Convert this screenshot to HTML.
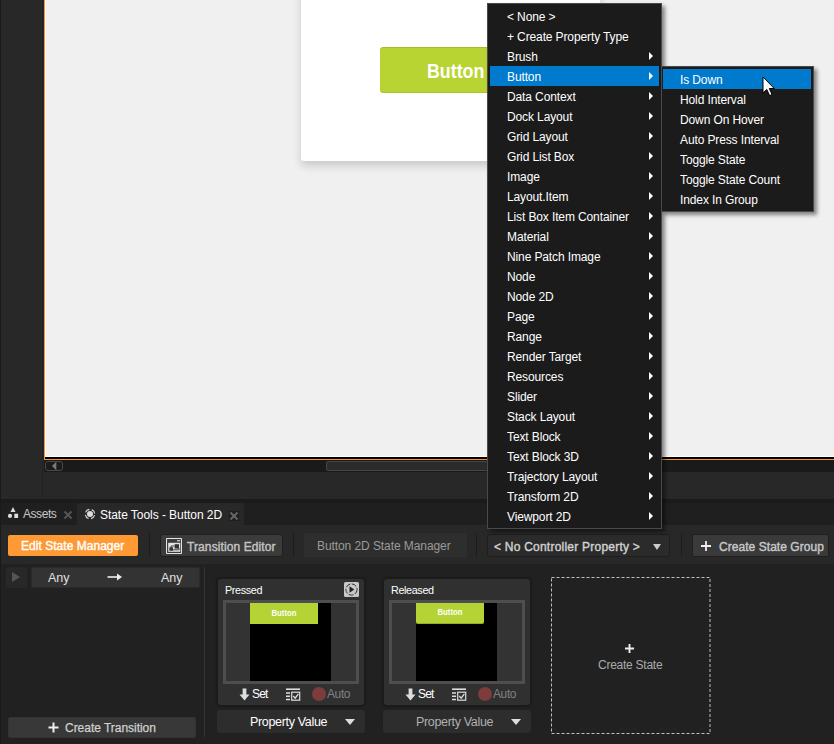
<!DOCTYPE html><html><head><meta charset="utf-8"><title>State Tools</title><style>
*{box-sizing:border-box;margin:0;padding:0}
html,body{width:834px;height:744px;overflow:hidden;background:#282828}
body{position:relative;font-family:"Liberation Sans",sans-serif;font-size:12px;color:#fff}
.a{position:absolute}
.t{position:absolute;white-space:nowrap;line-height:14px}
.menu{position:absolute;background:#1b1b1b;border:1px solid #4a4a4a;box-shadow:3px 3px 4px rgba(0,0,0,.45)}
.mi{position:absolute;left:2px;height:20px;line-height:20px;white-space:nowrap;letter-spacing:-0.12px}
.mi span{position:absolute;left:17px;top:1px}
.mi i{position:absolute;right:6px;top:6px;width:0;height:0;border-left:4.5px solid #fff;border-top:4px solid transparent;border-bottom:4px solid transparent}
.hl{background:#007acc}
.btn{position:absolute;background:#383838;border:1px solid #2b2b2b;border-radius:2px}
.sep{position:absolute;width:1px;background:#1c1c1c}
.card{position:absolute;width:146px;height:126px;background:#303030;border-radius:3px;box-shadow:0 0 0 1.5px #1b1b1b,0 0 2px 2px #1d1d1d}
.sb{-webkit-text-stroke:0.4px currentColor}
.pv{position:absolute;width:148px;height:23px;background:#2d2d2d;border-radius:3px}
</style></head><body>
<div class="a" style="left:0;top:0;width:1px;height:744px;background:#1a1a1a"></div>
<div class="a" style="left:42px;top:0;width:1px;height:499px;background:#222"></div>
<div class="a" style="left:44px;top:0;width:790px;height:460px;background:#f0f0f0;border-left:1px solid #f5922f;border-bottom:1px solid #f5922f"></div>
<div class="a" style="left:45px;top:0;width:1px;height:457px;background:#fff"></div>
<div class="a" style="left:45px;top:456px;width:789px;height:1px;background:#fff"></div>
<div class="a" style="left:45px;top:457px;width:789px;height:2px;background:#000"></div>
<div class="a" style="left:301px;top:-20px;width:299px;height:181px;background:#fff;border-radius:3px;box-shadow:0 5px 9px rgba(0,0,0,.16)"></div>
<div class="a" style="left:380px;top:47px;width:150px;height:46px;background:#b7d433;border-radius:4px;box-shadow:inset 0 1px 0 #a2bb30,inset 0 -1px 0 #a9c230"></div>
<div class="t" style="left:427px;top:59px;font-size:20px;line-height:24px;font-weight:bold;color:#fff;transform-origin:0 0;transform:scaleX(.89)">Button</div>
<div class="a" style="left:44px;top:460px;width:790px;height:12px;background:#1a1a1a"></div>
<div class="a" style="left:45px;top:461px;width:18px;height:10px;border:1px solid #484848;border-radius:3px;background:#1b1b1b"></div>
<div class="a" style="left:52px;top:462px;width:0;height:0;border-right:4px solid #7a7a7a;border-top:4px solid transparent;border-bottom:4px solid transparent"></div>
<div class="a" style="left:56px;top:462px;width:1px;height:8px;background:#3a3a3a"></div>
<div class="a" style="left:326px;top:461px;width:300px;height:10px;border:1px solid #454545;border-radius:2px;background:#2b2b2b"></div>
<div class="a" style="left:1px;top:499px;width:833px;height:4px;background:#1b1b1b"></div>
<div class="a" style="left:1px;top:503px;width:833px;height:22px;background:#1f1f1f"></div>
<div class="a" style="left:77px;top:503px;width:167px;height:22px;background:#282828;border-radius:3px 3px 0 0"></div>
<svg class="a" style="left:6px;top:505px" width="14" height="16" viewBox="0 0 14 16"><path d="M7 2 L9.5 7 H4.5 Z" fill="#ddd"/><circle cx="4" cy="10.9" r="2.1" fill="#ddd"/><rect x="8.3" y="8.7" width="3.8" height="4.3" fill="#ddd"/></svg>
<div class="t" style="left:23px;top:507px;color:#c8c8c8;letter-spacing:-0.45px">Assets</div>
<svg class="a" style="left:63px;top:510px" width="10" height="10" viewBox="0 0 10 10"><path d="M1.5 1.5 L8.5 8.5 M8.5 1.5 L1.5 8.5" stroke="#555" stroke-width="2"/></svg>
<svg class="a" style="left:83px;top:507px" width="14" height="14" viewBox="0 0 14 14"><circle cx="7" cy="7" r="3" fill="#ddd"/><circle cx="7" cy="7" r="4.7" fill="none" stroke="#ddd" stroke-width="1.1" stroke-dasharray="4.9 2.48"  stroke-dashoffset="-1.25"/></svg>
<div class="t" style="left:100px;top:508px;color:#fff;letter-spacing:-0.05px">State Tools - Button 2D</div>
<div class="a" style="left:229px;top:511px;width:10px;height:10px;background:#1e1e1e"></div>
<svg class="a" style="left:229px;top:511px" width="10" height="10" viewBox="0 0 10 10"><path d="M1.5 1.5 L8.5 8.5 M8.5 1.5 L1.5 8.5" stroke="#666" stroke-width="2"/></svg>
<div class="a" style="left:1px;top:525px;width:833px;height:39px;background:#282828"></div>
<div class="a" style="left:8px;top:535px;width:130px;height:21px;background:#ff9933;border-radius:2px"></div>
<div class="t sb" style="left:21px;top:539px;color:#fff;letter-spacing:0.03px">Edit State Manager</div>
<div class="sep" style="left:149px;top:533px;height:23px"></div>
<div class="btn" style="left:160px;top:534px;width:123px;height:23px;background:#3b3b3b;border-color:#1f1f1f;border-radius:3px"></div>
<svg class="a" style="left:166px;top:538px" width="16" height="16" viewBox="0 0 16 16"><rect x="0.5" y="0.5" width="15" height="15" rx="0.8" fill="none" stroke="#e4e4e4" stroke-width="1.1"/><rect x="11" y="2.2" width="3" height="1.1" fill="#e4e4e4"/><rect x="2.2" y="4.8" width="12" height="9" fill="#e4e4e4"/><rect x="3.4" y="9.2" width="3.6" height="3.6" fill="#333"/><rect x="8.6" y="6.2" width="4.4" height="4.4" fill="#333"/><path d="M5 9.2 V8 H8.6 M13 10 V11.8 H7" fill="none" stroke="#333" stroke-width="0.9"/></svg>
<div class="t sb" style="left:187px;top:540px;color:#c4c4c4;letter-spacing:0.1px">Transition Editor</div>
<div class="sep" style="left:293px;top:533px;height:23px"></div>
<div class="a" style="left:304px;top:533px;width:163px;height:24px;background:#2e2e2e"></div>
<div class="t" style="left:317px;top:539px;color:#9a9a9a;letter-spacing:-0.08px">Button 2D State Manager</div>
<div class="sep" style="left:476px;top:533px;height:23px"></div>
<div class="btn" style="left:487px;top:534px;width:183px;height:23px;background:#2b2b2b;border-color:#1e1e1e;border-radius:3px"></div>
<div class="t sb" style="left:494px;top:540px;color:#d0d0d0;letter-spacing:0.23px">&lt; No Controller Property &gt;</div>
<div class="a" style="left:653px;top:544px;width:0;height:0;border-top:6px solid #ccc;border-left:4.5px solid transparent;border-right:4.5px solid transparent"></div>
<div class="sep" style="left:681px;top:533px;height:23px"></div>
<div class="btn" style="left:692px;top:534px;width:137px;height:23px;background:#3a3a3a;border-color:#1f1f1f"></div>
<svg class="a" style="left:700px;top:540px" width="12" height="12" viewBox="0 0 12 12"><path d="M6 1 V11 M1 6 H11" stroke="#eee" stroke-width="1.8"/></svg>
<div class="t sb" style="left:719px;top:540px;color:#c8c8c8;letter-spacing:0.05px">Create State Group</div>
<div class="a" style="left:1px;top:564px;width:833px;height:180px;background:#212121"></div>
<div class="a" style="left:6px;top:567px;width:21px;height:21px;background:#282828;border-radius:2px"></div>
<div class="a" style="left:12px;top:572px;width:0;height:0;border-left:8px solid #555;border-top:5px solid transparent;border-bottom:5px solid transparent"></div>
<div class="a" style="left:31px;top:567px;width:169px;height:21px;background:#333;border-radius:2px;border:1px solid #2a2a2a"></div>
<div class="t" style="left:48px;top:571px;color:#e0e0e0;font-size:12.5px">Any</div>
<div class="t" style="left:161px;top:571px;color:#e0e0e0;font-size:12.5px">Any</div>
<svg class="a" style="left:107px;top:572px" width="16" height="10" viewBox="0 0 16 10"><path d="M0.5 5 H12" stroke="#eee" stroke-width="1.6"/><path d="M10 1.5 L15 5 L10 8.5 Z" fill="#eee"/></svg>
<div class="a" style="left:204px;top:567px;width:1px;height:170px;background:#333"></div>
<div class="btn" style="left:8px;top:717px;width:188px;height:21px;border-color:#333"></div>
<svg class="a" style="left:48px;top:722px" width="11" height="11" viewBox="0 0 11 11"><path d="M5.5 0.5 V10.5 M0.5 5.5 H10.5" stroke="#eee" stroke-width="2"/></svg>
<div class="t sb" style="left:65px;top:721px;color:#d0d0d0;-webkit-text-stroke-width:0.25px;letter-spacing:-0.03px">Create Transition</div>
<div class="card" style="left:218px;top:579px"></div>
<div class="t" style="left:225px;top:583px;font-size:10.8px;color:#fff;letter-spacing:-0.37px">Pressed</div>
<svg class="a" style="left:344px;top:582px" width="15" height="15" viewBox="0 0 15 15"><rect width="15" height="15" rx="1.5" fill="#c8c8c8"/><circle cx="7.5" cy="7.5" r="5.6" fill="none" stroke="#333" stroke-width="1" stroke-dasharray="5 1.5"/><path d="M5.5 4.3 L10.3 7.5 L5.5 10.7 Z" fill="#222"/></svg>
<div class="a" style="left:223px;top:600px;width:136px;height:84px;background:#333;border:3px solid #4e4e4e"></div>
<div class="a" style="left:250px;top:603px;width:81px;height:78px;background:#000"></div>
<div class="a" style="left:250px;top:603px;width:68px;height:21px;background:#b5d334;border-radius:0"></div>
<div class="t" style="left:250px;top:608px;width:68px;text-align:center;font-size:9px;line-height:10px;font-weight:bold;color:#fff;transform:scaleX(.86)">Button</div>
<svg class="a" style="left:239px;top:688px" width="11" height="13" viewBox="0 0 11 13"><path d="M3.6 0.5 H7.4 V6.5 H10.5 L5.5 12.5 L0.5 6.5 H3.6 Z" fill="#ddd"/></svg>
<div class="t" style="left:252px;top:687px;color:#fff;font-size:12px;letter-spacing:-0.8px">Set</div>
<svg class="a" style="left:285px;top:688px" width="16" height="14" viewBox="0 0 16 14"><path d="M1 1.2 H15" stroke="#ddd" stroke-width="1.6"/><path d="M1 5 H5 M1 8.2 H5 M1 11.4 H5" stroke="#ddd" stroke-width="1.5"/><rect x="6.7" y="4.2" width="8" height="8" fill="none" stroke="#ddd" stroke-width="1.2"/><path d="M8.3 8 L10.2 10.2 L13.4 5.8" fill="none" stroke="#ddd" stroke-width="1.3"/></svg>
<div class="a" style="left:312px;top:687px;width:14px;height:14px;border-radius:7px;background:#7d3b3b"></div>
<div class="t" style="left:327px;top:687px;color:#808080;font-size:12px;letter-spacing:-0.4px">Auto</div>
<div class="pv" style="left:217px;top:710px"></div>
<div class="t" style="left:250px;top:715px;color:#fff;font-size:12.5px;letter-spacing:-0.33px">Property Value</div>
<div class="a" style="left:345px;top:719px;width:0;height:0;border-top:6px solid #ddd;border-left:5px solid transparent;border-right:5px solid transparent"></div>
<div class="card" style="left:384px;top:579px"></div>
<div class="t" style="left:391px;top:583px;font-size:10.8px;color:#fff;letter-spacing:-0.37px">Released</div>
<div class="a" style="left:389px;top:600px;width:136px;height:84px;background:#333;border:3px solid #4e4e4e"></div>
<div class="a" style="left:416px;top:603px;width:81px;height:78px;background:#000"></div>
<div class="a" style="left:416px;top:603px;width:68px;height:21px;background:#b5d334;border-radius:0 0 2px 2px;border-bottom:1px solid #95ad2a"></div>
<div class="t" style="left:416px;top:607px;width:68px;text-align:center;font-size:9px;line-height:10px;font-weight:bold;color:#fff;transform:scaleX(.86)">Button</div>
<svg class="a" style="left:405px;top:688px" width="11" height="13" viewBox="0 0 11 13"><path d="M3.6 0.5 H7.4 V6.5 H10.5 L5.5 12.5 L0.5 6.5 H3.6 Z" fill="#ddd"/></svg>
<div class="t" style="left:418px;top:687px;color:#fff;font-size:12px;letter-spacing:-0.8px">Set</div>
<svg class="a" style="left:451px;top:688px" width="16" height="14" viewBox="0 0 16 14"><path d="M1 1.2 H15" stroke="#ddd" stroke-width="1.6"/><path d="M1 5 H5 M1 8.2 H5 M1 11.4 H5" stroke="#ddd" stroke-width="1.5"/><rect x="6.7" y="4.2" width="8" height="8" fill="none" stroke="#ddd" stroke-width="1.2"/><path d="M8.3 8 L10.2 10.2 L13.4 5.8" fill="none" stroke="#ddd" stroke-width="1.3"/></svg>
<div class="a" style="left:478px;top:687px;width:14px;height:14px;border-radius:7px;background:#7d3b3b"></div>
<div class="t" style="left:493px;top:687px;color:#808080;font-size:12px;letter-spacing:-0.4px">Auto</div>
<div class="pv" style="left:383px;top:710px"></div>
<div class="t" style="left:416px;top:715px;color:#b0b0b0;font-size:12.5px;letter-spacing:-0.33px">Property Value</div>
<div class="a" style="left:511px;top:719px;width:0;height:0;border-top:6px solid #ddd;border-left:5px solid transparent;border-right:5px solid transparent"></div>
<svg class="a" style="left:551px;top:577px" width="160" height="157" viewBox="0 0 160 157"><rect x="0.5" y="0.5" width="158.5" height="156" fill="none" stroke="#c0c0c0" stroke-width="1" stroke-dasharray="3 2"/></svg>
<svg class="a" style="left:624px;top:643px" width="11" height="11" viewBox="0 0 11 11"><path d="M5.5 1 V10 M1 5.5 H10" stroke="#eee" stroke-width="1.9"/></svg>
<div class="t" style="left:598px;top:658px;color:#aaa;letter-spacing:-0.25px">Create State</div>
<div class="menu" style="left:487px;top:3px;width:175px;height:526px">
<div class="mi" style="top:2px;width:169px"><span>&lt; None &gt;</span></div>
<div class="mi" style="top:22px;width:169px"><span>+ Create Property Type</span></div>
<div class="mi" style="top:42px;width:169px"><span>Brush</span><i></i></div>
<div class="mi hl" style="top:62px;width:169px"><span>Button</span><i></i></div>
<div class="mi" style="top:82px;width:169px"><span>Data Context</span><i></i></div>
<div class="mi" style="top:102px;width:169px"><span>Dock Layout</span><i></i></div>
<div class="mi" style="top:122px;width:169px"><span>Grid Layout</span><i></i></div>
<div class="mi" style="top:142px;width:169px"><span>Grid List Box</span><i></i></div>
<div class="mi" style="top:162px;width:169px"><span>Image</span><i></i></div>
<div class="mi" style="top:182px;width:169px"><span>Layout.Item</span><i></i></div>
<div class="mi" style="top:202px;width:169px"><span>List Box Item Container</span><i></i></div>
<div class="mi" style="top:222px;width:169px"><span>Material</span><i></i></div>
<div class="mi" style="top:242px;width:169px"><span>Nine Patch Image</span><i></i></div>
<div class="mi" style="top:262px;width:169px"><span>Node</span><i></i></div>
<div class="mi" style="top:282px;width:169px"><span>Node 2D</span><i></i></div>
<div class="mi" style="top:302px;width:169px"><span>Page</span><i></i></div>
<div class="mi" style="top:322px;width:169px"><span>Range</span><i></i></div>
<div class="mi" style="top:342px;width:169px"><span>Render Target</span><i></i></div>
<div class="mi" style="top:362px;width:169px"><span>Resources</span><i></i></div>
<div class="mi" style="top:382px;width:169px"><span>Slider</span><i></i></div>
<div class="mi" style="top:402px;width:169px"><span>Stack Layout</span><i></i></div>
<div class="mi" style="top:422px;width:169px"><span>Text Block</span><i></i></div>
<div class="mi" style="top:442px;width:169px"><span>Text Block 3D</span><i></i></div>
<div class="mi" style="top:462px;width:169px"><span>Trajectory Layout</span><i></i></div>
<div class="mi" style="top:482px;width:169px"><span>Transform 2D</span><i></i></div>
<div class="mi" style="top:502px;width:169px"><span>Viewport 2D</span><i></i></div>
</div>
<div class="menu" style="left:661px;top:66px;width:153px;height:146px">
<div class="mi hl" style="left:1px;top:2px;width:148px"><span style="left:17px">Is Down</span></div>
<div class="mi" style="left:1px;top:22px;width:148px"><span style="left:17px">Hold Interval</span></div>
<div class="mi" style="left:1px;top:42px;width:148px"><span style="left:17px">Down On Hover</span></div>
<div class="mi" style="left:1px;top:62px;width:148px"><span style="left:17px">Auto Press Interval</span></div>
<div class="mi" style="left:1px;top:82px;width:148px"><span style="left:17px">Toggle State</span></div>
<div class="mi" style="left:1px;top:102px;width:148px"><span style="left:17px">Toggle State Count</span></div>
<div class="mi" style="left:1px;top:122px;width:148px"><span style="left:17px">Index In Group</span></div>
</div>
<svg class="a" style="left:762px;top:76px" width="14" height="21" viewBox="0 0 14 21"><path d="M1 1 V17 L4.8 13.4 L7.6 19.6 L10 18.5 L7.3 12.5 H12.3 Z" fill="#fff" stroke="#000" stroke-width="1"/></svg>
</body></html>
